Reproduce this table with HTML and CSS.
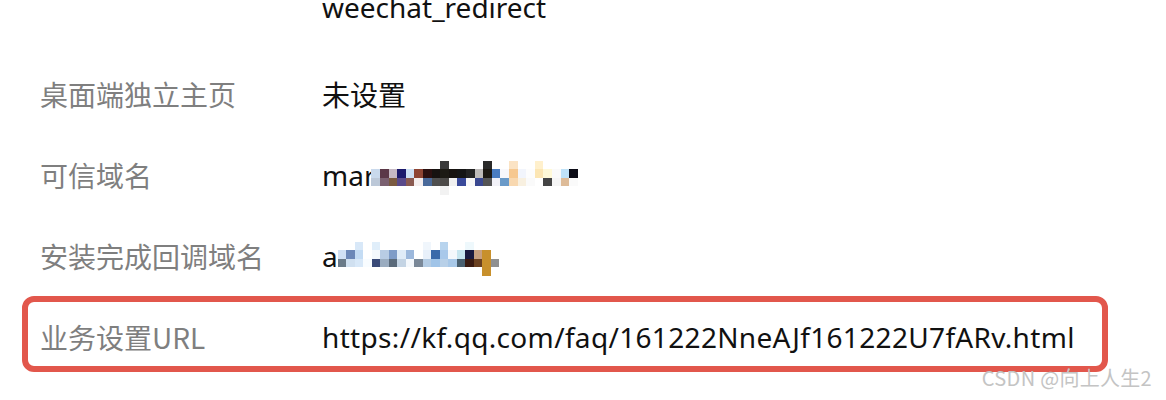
FILE: index.html
```html
<!DOCTYPE html>
<html lang="zh-CN">
<head>
<meta charset="utf-8">
<link rel="stylesheet" href="styles.css">
</head>
<body>
<div class="page">
  <div class="list">
    <div class="row row-first">
      <div class="label"></div>
      <div class="value">weechat_redirect</div>
    </div>
    <div class="row">
      <div class="label">桌面端独立主页</div>
      <div class="value">未设置</div>
    </div>
    <div class="row">
      <div class="label">可信域名</div>
      <div class="value"><span>mar</span>
        <div class="mosaic m1">
          <i></i><i></i><i></i><i></i><i></i><i></i><i></i><i></i><i style="background:#3a3a3a"></i><i></i><i></i><i></i><i></i><i style="background:#2a2a2a"></i><i></i><i></i><i style="background:#fbe3c4"></i><i></i><i></i><i style="background:#fff0cc"></i><i></i><i></i><i></i><i></i>
          <i style="background:#c9d9ec"></i><i style="background:#5b3848"></i><i style="background:#c6b9c4"></i><i style="background:#1c1a6c"></i><i style="background:#cde0f4"></i><i style="background:#8e4534"></i><i style="background:#2b1010"></i><i style="background:#161210"></i><i style="background:#1c1a14"></i><i style="background:#171310"></i><i style="background:#151515"></i><i style="background:#232323"></i><i style="background:#bdbab8"></i><i style="background:#1c1812"></i><i style="background:#4a7cc0"></i><i style="background:#f8f8fc"></i><i style="background:#f6c890"></i><i style="background:#f2f5fc"></i><i style="background:#fdfdfd"></i><i style="background:#fce6b4"></i><i style="background:#fff9d8"></i><i style="background:#fafafa"></i><i style="background:#bfe2f8"></i><i style="background:#0c0c16"></i>
          <i style="background:#bcc8d8"></i><i style="background:#7a6070"></i><i style="background:#7a5a40"></i><i style="background:#5a4a8a"></i><i style="background:#8a5a50"></i><i style="background:#f4eeee"></i><i style="background:#4a6a9a"></i><i style="background:#505050"></i><i style="background:#4c4a48"></i><i style="background:#f0f0f0"></i><i style="background:#3a4a9a"></i><i style="background:#f8f8f8"></i><i style="background:#3a4890"></i><i style="background:#555555"></i><i style="background:#f2f2f8"></i><i style="background:#6a9ac8"></i><i style="background:#f8d8b0"></i><i style="background:#f8f0e0"></i><i style="background:#fafafa"></i><i></i><i style="background:#454545"></i><i style="background:#f5f5f5"></i><i style="background:#ddbb98"></i><i style="background:#fafafa"></i>
          <i></i><i></i><i></i><i></i><i></i><i></i><i></i><i></i><i style="background:#f2f2f2"></i><i></i><i></i><i></i><i></i><i></i><i></i><i></i><i></i><i></i><i></i><i></i><i></i><i></i><i></i><i></i>
        </div>
      </div>
    </div>
    <div class="row">
      <div class="label">安装完成回调域名</div>
      <div class="value"><span>a</span>
        <div class="mosaic m2">
          <i></i><i></i><i style="background:#d8e8f8"></i><i></i><i style="background:#e0eefa"></i><i></i><i></i><i></i><i></i><i></i><i style="background:#f0f6fc"></i><i></i><i style="background:#b8d4ee"></i><i></i><i></i><i style="background:#eef8fc"></i><i></i><i></i><i></i>
          <i style="background:#d0e0f4"></i><i style="background:#6c88b8"></i><i style="background:#c4dcf4"></i><i></i><i style="background:#f4f8fc"></i><i style="background:#b8cce4"></i><i style="background:#7e9cc8"></i><i style="background:#e0ecf8"></i><i style="background:#9cb8dc"></i><i></i><i style="background:#e8f0fa"></i><i style="background:#3a6aaa"></i><i style="background:#a8c8ea"></i><i style="background:#f4f8fc"></i><i style="background:#c8e6f0"></i><i style="background:#1a1a40"></i><i style="background:#c8a080"></i><i style="background:#c8902c"></i><i></i>
          <i style="background:#6a7a88"></i><i style="background:#d0e0f0"></i><i style="background:#d8e8f8"></i><i style="background:#f8fcff"></i><i style="background:#3a4a78"></i><i style="background:#9aacc0"></i><i style="background:#5a6a7a"></i><i style="background:#c4d4e4"></i><i style="background:#f4f8fc"></i><i style="background:#7a8898"></i><i style="background:#b4cce4"></i><i style="background:#a0c4e8"></i><i style="background:#b8d0e8"></i><i style="background:#a8c8e8"></i><i style="background:#4a6070"></i><i style="background:#3a1a10"></i><i style="background:#6a4020"></i><i style="background:#c8902c"></i><i style="background:#909090"></i>
          <i></i><i></i><i></i><i></i><i></i><i></i><i></i><i></i><i></i><i></i><i></i><i></i><i></i><i></i><i></i><i></i><i></i><i style="background:#c8902c"></i><i></i>
        </div>
      </div>
    </div>
    <div class="row row-hl">
      <div class="label">业务设置URL</div>
      <div class="value url">https://kf.qq.com/faq/161222NneAJf161222U7fARv.html</div>
    </div>
  </div>
  <div class="watermark">CSDN @向上人生2</div>
</div>
</body>
</html>
```

FILE: styles.css
```css
* { box-sizing: border-box; }
html, body { margin: 0; padding: 0; background: #fff; }
body {
  font-family: "Segoe UI", "Noto Sans", "Noto Sans CJK SC", sans-serif;
  font-size: 28px;
}
.page {
  position: relative;
  width: 1166px;
  height: 400px;
  overflow: hidden;
}
.list {
  display: flex;
  flex-direction: column;
  margin-top: -28px;
}
.row {
  display: flex;
  align-items: center;
  height: 81px;
  padding-left: 40px;
}
.row-first {
  height: 81px;
  padding-bottom: 12px;
}
.label {
  width: 282px;
  flex: none;
  color: #7f7f7f;
  font-family: "Noto Sans CJK SC", "Noto Sans", sans-serif;
}
.value {
  color: #111;
  display: flex;
  align-items: center;
  white-space: nowrap;
}
.url {
  letter-spacing: 0.33px;
}
.row-hl {
  margin-left: 22px;
  width: 1086px;
  height: 76px;
  padding-left: 12px;
  padding-top: 6px;
  border: 6px solid #e2574c;
  border-radius: 12px;
}
.mosaic {
  display: grid;
  margin-top: 6px;
}
.mosaic i {
  display: block;
  background: #fff;
}
.m1 {
  grid-template-columns: repeat(24, 8.6px);
  grid-auto-rows: 8.5px;
  margin-left: -4px;
}
.m2 {
  grid-template-columns: repeat(19, 8.5px);
  grid-auto-rows: 8.5px;
  margin-left: 0;
}
.watermark {
  position: absolute;
  right: 14px;
  bottom: 8px;
  font-family: "Noto Sans CJK SC", "Noto Sans", sans-serif;
  font-size: 20px;
  color: #c4c4c4;
  letter-spacing: 0.3px;
}
```
